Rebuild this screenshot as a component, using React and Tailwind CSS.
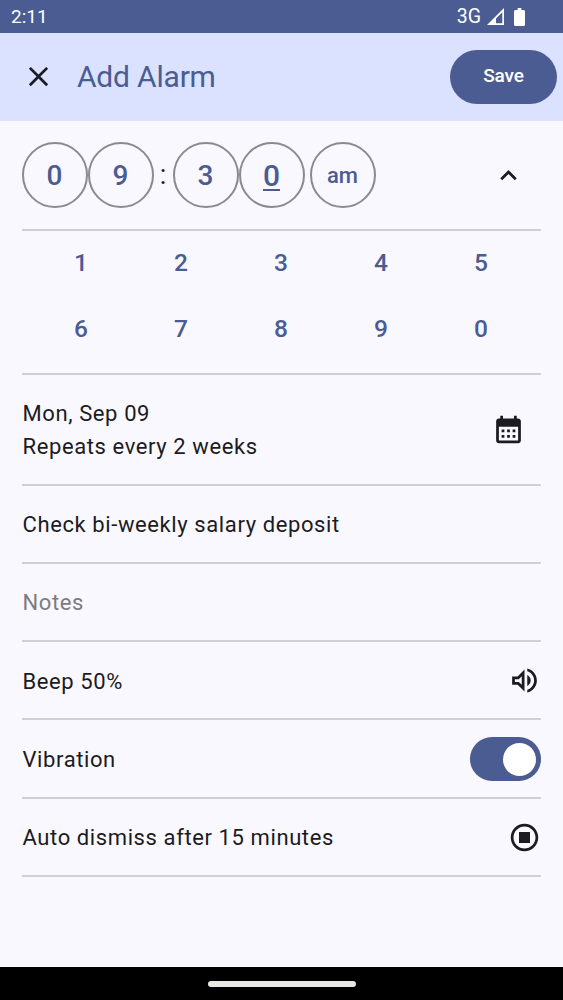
import { useState } from 'react';

const ICONS = {
  close: 'M19 6.41 17.59 5 12 10.59 6.41 5 5 6.41 10.59 12 5 17.59 6.41 19 12 13.41 17.59 19 19 17.59 13.41 12z',
  up: 'M7.41 15.41 12 10.83l4.59 4.58L18 14l-6-6-6 6z',
  calendar:
    'M19 4h-1V2h-2v2H8V2H6v2H5c-1.11 0-1.99.9-1.99 2L3 20c0 1.1.89 2 2 2h14c1.1 0 2-.9 2-2V6c0-1.1-.9-2-2-2zm0 16H5V10h14v10zM9 14H7v-2h2v2zm4 0h-2v-2h2v2zm4 0h-2v-2h2v2zm-8 4H7v-2h2v2zm4 0h-2v-2h2v2zm4 0h-2v-2h2v2z',
  volume:
    'M3 9v6h4l5 5V4L7 9H3zm7-.17v6.34L7.83 13H5v-2h2.83L10 8.83zM16.5 12c0-1.77-1.02-3.29-2.5-4.03v8.05c1.48-.73 2.5-2.25 2.5-4.02zM14 3.23v2.06c2.89.86 5 3.54 5 6.71s-2.11 5.85-5 6.71v2.06c4.01-.91 7-4.49 7-8.77s-2.99-7.86-7-8.77z',
  stop: 'M12 2C6.48 2 2 6.48 2 12s4.48 10 10 10 10-4.48 10-10S17.52 2 12 2zm0 18c-4.42 0-8-3.58-8-8s3.58-8 8-8 8 3.58 8 8-3.58 8-8 8zm4-4H8V8h8v8z',
};

function Icon({ name }) {
  return (
    <svg viewBox="0 0 24 24" className="size-[33px] shrink-0 fill-[#1b1b21]">
      <path d={ICONS[name]} />
    </svg>
  );
}

function StatusBar() {
  return (
    <div className="flex h-[33px] shrink-0 items-center justify-between bg-[#4a5c92] pl-[11px] pr-[38px] text-[19px] text-white">
      <span className="pt-[2px]">2:11</span>
      <div className="flex items-center">
        <span className="text-[19.5px]">3G</span>
        <svg viewBox="0 0 17 17" className="ml-1.5 size-[17px]">
          <path fillRule="evenodd" fill="white" d="M17 0v17H0zM9 10.500v4.800h6.300V4.200z" />
        </svg>
        <svg viewBox="0 0 12 18" preserveAspectRatio="none" className="ml-2.5 h-[18px] w-[11px]">
          <path fill="white" d="M4 0h4v2h2.5Q12 2 12 3.500v13Q12 18 10.500 18h-9Q0 18 0 16.500v-13Q0 2 1.500 2H4z" />
        </svg>
      </div>
    </div>
  );
}

function Digit({ value, active, onClick }) {
  return (
    <button
      onClick={onClick}
      className={`flex size-[66px] items-center justify-center rounded-full border-2 border-[#8b8a90] pr-px font-medium text-[#4a5c92] ${
        active ? 'text-[30px] underline decoration-[1.5px] underline-offset-[3px]' : 'pt-px text-[28px]'
      }`}
    >
      {value}
    </button>
  );
}

function Row({ children, className = 'h-[78.3px] pt-px' }) {
  return (
    <div className={`flex items-center justify-between border-b-2 border-[#d0ced6] ${className}`}>
      {children}
    </div>
  );
}

export default function App() {
  const [digits, setDigits] = useState(['0', '9', '3', '0']);
  const [active, setActive] = useState(3);
  const [vibration, setVibration] = useState(true);

  const enter = (n) => {
    setDigits(digits.map((d, i) => (i === active ? String(n) : d)));
  };

  const digit = (i) => <Digit value={digits[i]} active={active === i} onClick={() => setActive(i)} />;

  return (
    <div className="flex h-[1000px] w-[563px] flex-col overflow-hidden bg-[#faf8ff] font-['Roboto',sans-serif] text-[#1b1b21]">
      <StatusBar />

      <header className="flex h-[88px] shrink-0 items-center bg-[#dae2ff] pb-px pl-[22px] pr-1.5">
        <Icon name="close" />
        <h1 className="ml-[22px] flex-1 text-[30px] tracking-[-0.2px] text-[#4a5c92]">Add Alarm</h1>
        <button className="h-[54px] w-[107px] rounded-full bg-[#4a5c92] text-[19px] font-medium tracking-[-0.1px] text-white">
          Save
        </button>
      </header>

      <main className="flex-1 px-[22px] text-[22px] tracking-[0.6px]">
        {/* Time */}
        <Row className="h-[110px]">
          <div className="flex items-center tracking-normal">
            {digit(0)}
            {digit(1)}
            <span className="w-[19px] pr-px text-center text-[27px]">:</span>
            {digit(2)}
            {digit(3)}
            <button className="ml-[5px] flex size-[66px] items-center justify-center rounded-full border-2 border-[#8b8a90] pr-px text-[22px] font-medium text-[#4a5c92]">
              am
            </button>
          </div>
          <div className="mr-4">
            <Icon name="up" />
          </div>
        </Row>

        {/* Keypad */}
        <div className="grid h-[143.5px] grid-cols-5 grid-rows-[65.5px_65.5px] border-b-2 border-[#d0ced6] pl-[9px] pr-2.5 text-[24.5px] font-medium tracking-normal text-[#4a5c92]">
          {[1, 2, 3, 4, 5, 6, 7, 8, 9, 0].map((n) => (
            <button key={n} onClick={() => enter(n)}>
              {n}
            </button>
          ))}
        </div>

        <Row className="h-[111px] pt-px">
          <div className="pl-[0.5px] pt-px leading-[33px]">
            <p>Mon, Sep 09</p>
            <p>Repeats every 2 weeks</p>
          </div>
          <div className="mr-4">
            <Icon name="calendar" />
          </div>
        </Row>

        <Row>
          <span className="pl-[0.5px] pt-px">Check bi-weekly salary deposit</span>
        </Row>

        <Row>
          <span className="pl-[0.5px] pt-px text-[#7c7b82]">Notes</span>
        </Row>

        <Row>
          <span className="pl-[0.5px] pt-px">Beep 50%</span>
          <Icon name="volume" />
        </Row>

        <Row>
          <span className="pl-[0.5px] pt-px">Vibration</span>
          <button
            onClick={() => setVibration(!vibration)}
            className={`flex h-11 w-[71px] items-center rounded-full bg-[#4a5c92] px-[5px] ${
              vibration ? 'justify-end' : 'justify-start'
            }`}
          >
            <span className="size-[33px] rounded-full bg-white" />
          </button>
        </Row>

        <Row>
          <span className="pl-[0.5px] pt-px">Auto dismiss after 15 minutes</span>
          <Icon name="stop" />
        </Row>
      </main>

      {/* Gesture bar */}
      <div className="flex h-[33px] shrink-0 items-center justify-center bg-black">
        <div className="h-1.5 w-[148px] rounded-full bg-[#e8e8e6]" />
      </div>
    </div>
  );
}
